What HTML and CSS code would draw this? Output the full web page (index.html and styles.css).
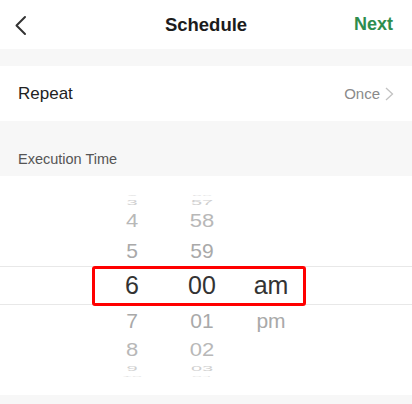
FILE: index.html
```html
<!DOCTYPE html>
<html>
<head>
<meta charset="utf-8">
<link rel="stylesheet" href="styles.css">
</head>
<body>
<div class="screen">
  <header class="topbar">
    <span class="back">
      <svg width="14" height="22" viewBox="0 0 14 22"><polyline points="11,2 2.5,10.5 11,19" fill="none" stroke="#333" stroke-width="2" stroke-linecap="round" stroke-linejoin="round"/></svg>
    </span>
    <h1 class="title">Schedule</h1>
    <span class="next">Next</span>
  </header>
  <div class="gap"></div>
  <div class="row">
    <span class="row-label">Repeat</span>
    <span class="row-value">Once
      <svg class="chev" width="10" height="14" viewBox="0 0 10 14"><polyline points="2,1 8.5,7 2,13" fill="none" stroke="#c2c2c2" stroke-width="1.3"/></svg>
    </span>
  </div>
  <div class="section-title">Execution Time</div>
  <div class="picker">
    <div class="band"></div>
    <div class="wheels">
      <div class="wheel w-hour">
        <div class="it r4"><span>2</span></div>
        <div class="it r3"><span>3</span></div>
        <div class="it r2"><span>4</span></div>
        <div class="it r1"><span>5</span></div>
        <div class="it r0"><span>6</span></div>
        <div class="it r1"><span>7</span></div>
        <div class="it r2"><span>8</span></div>
        <div class="it r3"><span>9</span></div>
        <div class="it r4"><span>10</span></div>
      </div>
      <div class="wheel w-min">
        <div class="it r4"><span>56</span></div>
        <div class="it r3"><span>57</span></div>
        <div class="it r2"><span>58</span></div>
        <div class="it r1"><span>59</span></div>
        <div class="it r0"><span>00</span></div>
        <div class="it r1"><span>01</span></div>
        <div class="it r2"><span>02</span></div>
        <div class="it r3"><span>03</span></div>
        <div class="it r4"><span>04</span></div>
      </div>
      <div class="wheel w-ampm">
        <div class="it r4"></div>
        <div class="it r3"></div>
        <div class="it r2"></div>
        <div class="it r1"></div>
        <div class="it r0"><span>am</span></div>
        <div class="it r1"><span>pm</span></div>
        <div class="it r2"></div>
        <div class="it r3"></div>
        <div class="it r4"></div>
      </div>
    </div>
    <div class="highlight"></div>
  </div>
  <div class="footer-gap"></div>
</div>
</body>
</html>
```

FILE: styles.css
```css
* { box-sizing: border-box; }
html, body { margin: 0; padding: 0; background: #f7f7f7; }
body { font-family: "Liberation Sans", Arial, sans-serif; color: #222; }
.screen { width: 412px; height: 404px; overflow: hidden; background: #f7f7f7; }

.topbar {
  height: 49px;
  background: #fff;
  display: flex;
  align-items: center;
  justify-content: space-between;
  padding: 0 19px 0 14px;
  position: relative;
}
.back { display: flex; width: 14px; height: 22px; margin-top: 2px; }
.title {
  margin: 0;
  font-size: 18.5px;
  font-weight: bold;
  color: #1c1c1c;
  position: absolute;
  left: 0; right: 0;
  text-align: center;
  pointer-events: none;
}
.next { font-size: 18px; font-weight: bold; color: #2e8d4e; }

.gap { height: 17px; }

.row {
  height: 55px;
  background: #fff;
  display: flex;
  align-items: center;
  justify-content: space-between;
  padding: 0 18px 0 18px;
}
.row-label { font-size: 17px; color: #222; }
.row-value { font-size: 15px; color: #8a8a8a; display: flex; align-items: center; gap: 4px; }
.chev { display: block; margin-top: 1px; }

.section-title {
  height: 55px;
  padding: 30px 18px 0 18px;
  font-size: 14.5px;
  color: #555;
}

.picker {
  height: 219px;
  background: #fff;
  position: relative;
  padding-top: 16.5px;
}
.band {
  position: absolute;
  left: 0; right: 0;
  top: 90px;
  height: 39px;
  border-top: 1px solid #e8e8e8;
  border-bottom: 1px solid #e8e8e8;
}
.highlight {
  position: absolute;
  left: 92px;
  top: 90px;
  width: 214px;
  height: 40px;
  border: 3px solid #ff0000;
  border-radius: 3px;
}
.wheels {
  display: flex;
  padding-left: 97px;
  position: relative;
}
.wheel { display: flex; flex-direction: column; }
.w-hour, .w-min { width: 70px; }
.w-ampm { width: 68px; }
.it {
  display: flex;
  align-items: center;
  justify-content: center;
  overflow: visible;
  white-space: nowrap;
}
.it span { display: inline-block; }
.r0 { height: 38px; font-size: 25px; color: #333; }
.r1 { height: 32px; font-size: 21px; color: #a9a9a9; }
.r2 { height: 27px; font-size: 22px; color: #b8b8b8; }
.r2 span { transform: scaleY(0.82); }
.r3 { height: 10px; font-size: 20px; color: #cfcfcf; }
.r3 span { transform: scaleY(0.38); }
.r4 { height: 5px; font-size: 18px; color: #e4e4e4; overflow: hidden; }
.r4 span { transform: scaleY(0.12); }

.footer-gap { height: 9px; background: #f7f7f7; }
```
